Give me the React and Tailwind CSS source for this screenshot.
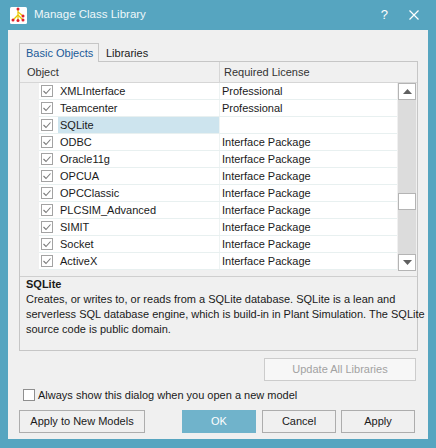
import React from "react";

const rows = [
  ["XMLInterface", "Professional"],
  ["Teamcenter", "Professional"],
  ["SQLite", ""],
  ["ODBC", "Interface Package"],
  ["Oracle11g", "Interface Package"],
  ["OPCUA", "Interface Package"],
  ["OPCClassic", "Interface Package"],
  ["PLCSIM_Advanced", "Interface Package"],
  ["SIMIT", "Interface Package"],
  ["Socket", "Interface Package"],
  ["ActiveX", "Interface Package"],
];

function Check() {
  return (
    <div className="w-[12px] h-[12px] border border-[#a3a3a3] bg-white flex items-center justify-center shrink-0">
      <svg width="10" height="10" viewBox="0 0 10 10">
        <polyline points="1.5,5 4,7.5 8.5,2.5" fill="none" stroke="#7a7a7a" strokeWidth="1.1" />
      </svg>
    </div>
  );
}

function AppIcon() {
  return (
    <svg width="17" height="17" viewBox="0 0 17 17">
      <rect x="0" y="0" width="17" height="17" rx="1.5" fill="#ffffff" />
      <g stroke="#e8c800" strokeWidth="1.2" fill="none">
        <line x1="8" y1="2" x2="8" y2="8" />
        <line x1="8" y1="8" x2="3" y2="13" />
        <line x1="8" y1="8" x2="13" y2="13" />
        <line x1="8" y1="8" x2="8" y2="13" />
        <line x1="8" y1="5" x2="13" y2="9" />
      </g>
      <g fill="#e0202a">
        <circle cx="8" cy="2" r="1.5" />
        <circle cx="3" cy="13" r="1.5" />
        <circle cx="8" cy="13.5" r="1.5" />
        <circle cx="13" cy="13" r="1.5" />
        <circle cx="13" cy="9" r="1.5" />
      </g>
    </svg>
  );
}

export default function App() {
  const font = { fontFamily: '"Liberation Sans", Arial, sans-serif' };
  return (
    <div className="w-[436px] h-[448px] bg-[#56a5c0] flex flex-col text-[11px] text-[#1a1a1a]" style={font}>
      {/* Title bar */}
      <div className="h-[30px] flex items-center pl-[10px] shrink-0">
        <AppIcon />
        <div className="ml-[7px] text-[11.5px] text-[#eef7fa]">Manage Class Library</div>
        <div className="ml-auto text-[13px] text-white mr-[21px]">?</div>
        <svg width="10" height="10" viewBox="0 0 10 10" className="mr-[17px]">
          <path d="M0.5 0.5 L9.5 9.5 M9.5 0.5 L0.5 9.5" stroke="#ffffff" strokeWidth="1.2" />
        </svg>
      </div>

      {/* Client area */}
      <div className="mx-[8px] h-[409px] bg-[#f0f0f0] pt-[13px] pl-[11px] flex flex-col">
        {/* Tabs */}
        <div className="flex h-[19px] items-end">
          <div className="relative z-10 h-[19px] w-[80px] border border-b-0 border-[#c6c6c6] bg-[#f0f0f0] text-[#1b5a98] flex items-center pl-[6px]">
            Basic Objects
          </div>
          <div className="h-[18px] flex items-center pl-[7px]">Libraries</div>
        </div>

        {/* Panel */}
        <div className="w-[399px] h-[290px] -mt-px border border-[#c6c6c6] flex flex-col">
          {/* List header */}
          <div className="h-[21px] border-b border-[#d6d6d6] flex text-[#333]">
            <div className="w-[200px] border-r border-[#d6d6d6] pl-[7px] flex items-center">Object</div>
            <div className="flex-1 pl-[4px] flex items-center">Required License</div>
          </div>
          {/* List body */}
          <div className="h-[194px] border-b border-[#cfcfcf] flex">
            <div className="w-[19px] shrink-0" />
            <div className="w-[358px] flex flex-col shrink-0">
              {rows.map(([name, lic]) => (
                <div key={name} className="h-[17px] flex bg-white border-b border-[#e8f0f0]">
                  <div className="w-[181px] flex items-center border-r border-[#eef3f3]">
                    <div className="ml-[2px]"><Check /></div>
                    <div
                      className={
                        "ml-[5px] h-full flex-1 flex items-center pl-[2px] " +
                        (name === "SQLite" ? "bg-[#cde4ee]" : "")
                      }
                    >
                      {name}
                    </div>
                  </div>
                  <div className="flex-1 flex items-center pl-[2px]">{lic}</div>
                </div>
              ))}
            </div>
            {/* Scrollbar */}
            <div className="w-[18px] h-[188px] bg-[#dcdcdc] ml-px flex flex-col">
              <div className="h-[17px] bg-white border border-[#b4b4b4] flex items-center justify-center">
                <svg width="9" height="5" viewBox="0 0 9 5"><polygon points="0,5 4.5,0 9,5" fill="#606060" /></svg>
              </div>
              <div className="h-[93px]" />
              <div className="h-[17px] bg-white border border-[#b4b4b4]" />
              <div className="flex-1" />
              <div className="h-[17px] bg-white border border-[#b4b4b4] flex items-center justify-center">
                <svg width="9" height="5" viewBox="0 0 9 5"><polygon points="0,0 9,0 4.5,5" fill="#606060" /></svg>
              </div>
            </div>
          </div>
          {/* Description */}
          <div className="pl-[6px] leading-[15px] whitespace-nowrap">
            <div className="font-bold">SQLite</div>
            <div>Creates, or writes to, or reads from a SQLite database. SQLite is a lean and</div>
            <div>serverless SQL database engine, which is build-in in Plant Simulation. The SQLite</div>
            <div>source code is public domain.</div>
          </div>
        </div>

        {/* Update button */}
        <div className="w-[399px] flex justify-end mt-[7px]">
          <div className="w-[152px] h-[23px] mr-[2px] border border-[#cccccc] bg-[#f7f7f7] text-[#a2a2a2] flex items-center justify-center">
            Update All Libraries
          </div>
        </div>

        {/* Always show checkbox */}
        <div className="flex items-center mt-[8px] ml-[4px] h-[12px]">
          <div className="w-[12px] h-[12px] border border-[#8f8f8f] bg-white" />
          <div className="ml-[3px]">Always show this dialog when you open a new model</div>
        </div>

        {/* Bottom buttons */}
        <div className="w-[399px] flex mt-[9px]">
          <div className="w-[126px] h-[23px] border border-[#adadad] flex items-center justify-center">Apply to New Models</div>
          <div className="w-[74px] h-[23px] ml-[37px] bg-[#70b3cb] text-white flex items-center justify-center">OK</div>
          <div className="w-[74px] h-[23px] ml-[6px] border border-[#adadad] flex items-center justify-center">Cancel</div>
          <div className="w-[74px] h-[23px] ml-[5px] border border-[#adadad] flex items-center justify-center">Apply</div>
        </div>
      </div>
    </div>
  );
}
